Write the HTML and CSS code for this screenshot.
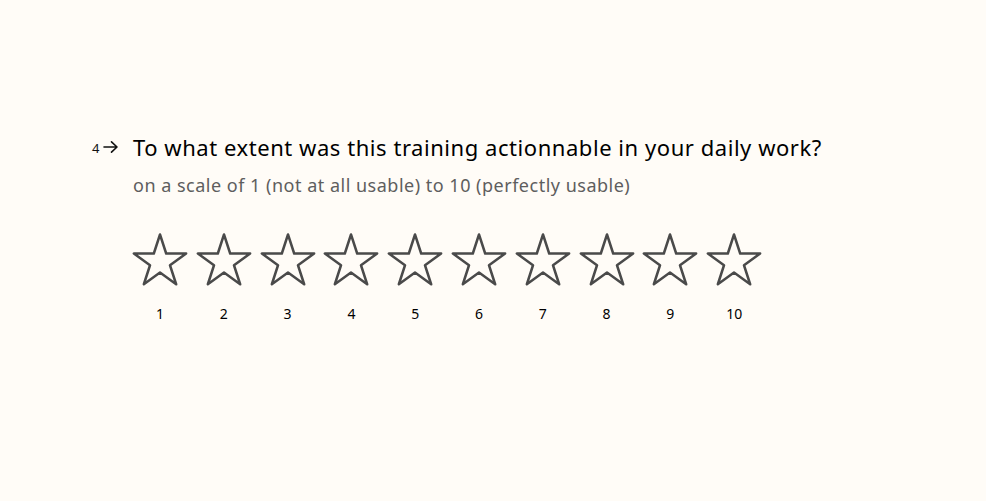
FILE: index.html
```html
<!DOCTYPE html>
<html lang="en">
<head>
<meta charset="utf-8">
<title>Question 4</title>
<link rel="stylesheet" href="styles.css">
</head>
<body>
<main class="page">
  <section class="question">
    <div class="q-head">
      <div class="q-index"><span class="q-num">4</span><svg class="q-arrow" width="16" height="14" viewBox="0 0 16 14"><path d="M1 7h13M8.5 1.8L14 7l-5.5 5.2" fill="none" stroke="#111" stroke-width="1.6" stroke-linecap="round" stroke-linejoin="round"/></svg></div>
      <div class="q-body">
        <h1 class="q-title">To what extent was this training actionnable in your daily work?</h1>
        <p class="q-sub">on a scale of 1 (not at all usable) to 10 (perfectly usable)</p>
        <div class="stars">
          <div class="star"><svg viewBox="0 0 60 56" width="60" height="56"><path d="M30 2.5L36.17 21.5L56.16 21.5L39.99 33.24L46.16 52.25L30 40.5L13.84 52.25L20.01 33.24L3.84 21.5L23.83 21.5Z"/></svg><span class="star-label">1</span></div>
          <div class="star"><svg viewBox="0 0 60 56" width="60" height="56"><path d="M30 2.5L36.17 21.5L56.16 21.5L39.99 33.24L46.16 52.25L30 40.5L13.84 52.25L20.01 33.24L3.84 21.5L23.83 21.5Z"/></svg><span class="star-label">2</span></div>
          <div class="star"><svg viewBox="0 0 60 56" width="60" height="56"><path d="M30 2.5L36.17 21.5L56.16 21.5L39.99 33.24L46.16 52.25L30 40.5L13.84 52.25L20.01 33.24L3.84 21.5L23.83 21.5Z"/></svg><span class="star-label">3</span></div>
          <div class="star"><svg viewBox="0 0 60 56" width="60" height="56"><path d="M30 2.5L36.17 21.5L56.16 21.5L39.99 33.24L46.16 52.25L30 40.5L13.84 52.25L20.01 33.24L3.84 21.5L23.83 21.5Z"/></svg><span class="star-label">4</span></div>
          <div class="star"><svg viewBox="0 0 60 56" width="60" height="56"><path d="M30 2.5L36.17 21.5L56.16 21.5L39.99 33.24L46.16 52.25L30 40.5L13.84 52.25L20.01 33.24L3.84 21.5L23.83 21.5Z"/></svg><span class="star-label">5</span></div>
          <div class="star"><svg viewBox="0 0 60 56" width="60" height="56"><path d="M30 2.5L36.17 21.5L56.16 21.5L39.99 33.24L46.16 52.25L30 40.5L13.84 52.25L20.01 33.24L3.84 21.5L23.83 21.5Z"/></svg><span class="star-label">6</span></div>
          <div class="star"><svg viewBox="0 0 60 56" width="60" height="56"><path d="M30 2.5L36.17 21.5L56.16 21.5L39.99 33.24L46.16 52.25L30 40.5L13.84 52.25L20.01 33.24L3.84 21.5L23.83 21.5Z"/></svg><span class="star-label">7</span></div>
          <div class="star"><svg viewBox="0 0 60 56" width="60" height="56"><path d="M30 2.5L36.17 21.5L56.16 21.5L39.99 33.24L46.16 52.25L30 40.5L13.84 52.25L20.01 33.24L3.84 21.5L23.83 21.5Z"/></svg><span class="star-label">8</span></div>
          <div class="star"><svg viewBox="0 0 60 56" width="60" height="56"><path d="M30 2.5L36.17 21.5L56.16 21.5L39.99 33.24L46.16 52.25L30 40.5L13.84 52.25L20.01 33.24L3.84 21.5L23.83 21.5Z"/></svg><span class="star-label">9</span></div>
          <div class="star"><svg viewBox="0 0 60 56" width="60" height="56"><path d="M30 2.5L36.17 21.5L56.16 21.5L39.99 33.24L46.16 52.25L30 40.5L13.84 52.25L20.01 33.24L3.84 21.5L23.83 21.5Z"/></svg><span class="star-label">10</span></div>
        </div>
      </div>
    </div>
  </section>
</main>
</body>
</html>
```
FILE: styles.css
```css
html, body {
  margin: 0;
  padding: 0;
  background: #fffcf7;
}
body {
  width: 986px;
  height: 501px;
  overflow: hidden;
  font-family: "Noto Sans", "Liberation Sans", sans-serif;
  color: #000;
}
.page {
  padding: 132px 0 0 92px;
}
.q-head {
  display: flex;
}
.q-index {
  width: 41px;
  display: flex;
  align-items: center;
  height: 30px;
  gap: 4px;
}
.q-num {
  font-size: 13px;
  color: #111;
  line-height: 1;
  padding-top: 3px;
}
.q-arrow {
  display: block;
}
.q-body {
  display: flex;
  flex-direction: column;
}
.q-title {
  margin: 0;
  font-size: 22px;
  font-weight: 400;
  line-height: 30px;
  letter-spacing: 0.55px;
  color: #000;
}
.q-sub {
  margin: 11px 0 0;
  font-size: 18px;
  line-height: 24px;
  letter-spacing: 0.5px;
  color: #5e5e5e;
}
.stars {
  display: flex;
  gap: 3.8px;
  margin-top: 35px;
  margin-left: -3px;
}
.star {
  width: 60px;
  display: flex;
  flex-direction: column;
  align-items: center;
}
.star svg {
  display: block;
}
.star svg path {
  fill: none;
  stroke: #4a4a4a;
  stroke-width: 2.5;
  stroke-linejoin: round;
}
.star-label {
  margin-top: 18px;
  font-size: 14px;
  line-height: 16px;
  color: #000;
}
```
